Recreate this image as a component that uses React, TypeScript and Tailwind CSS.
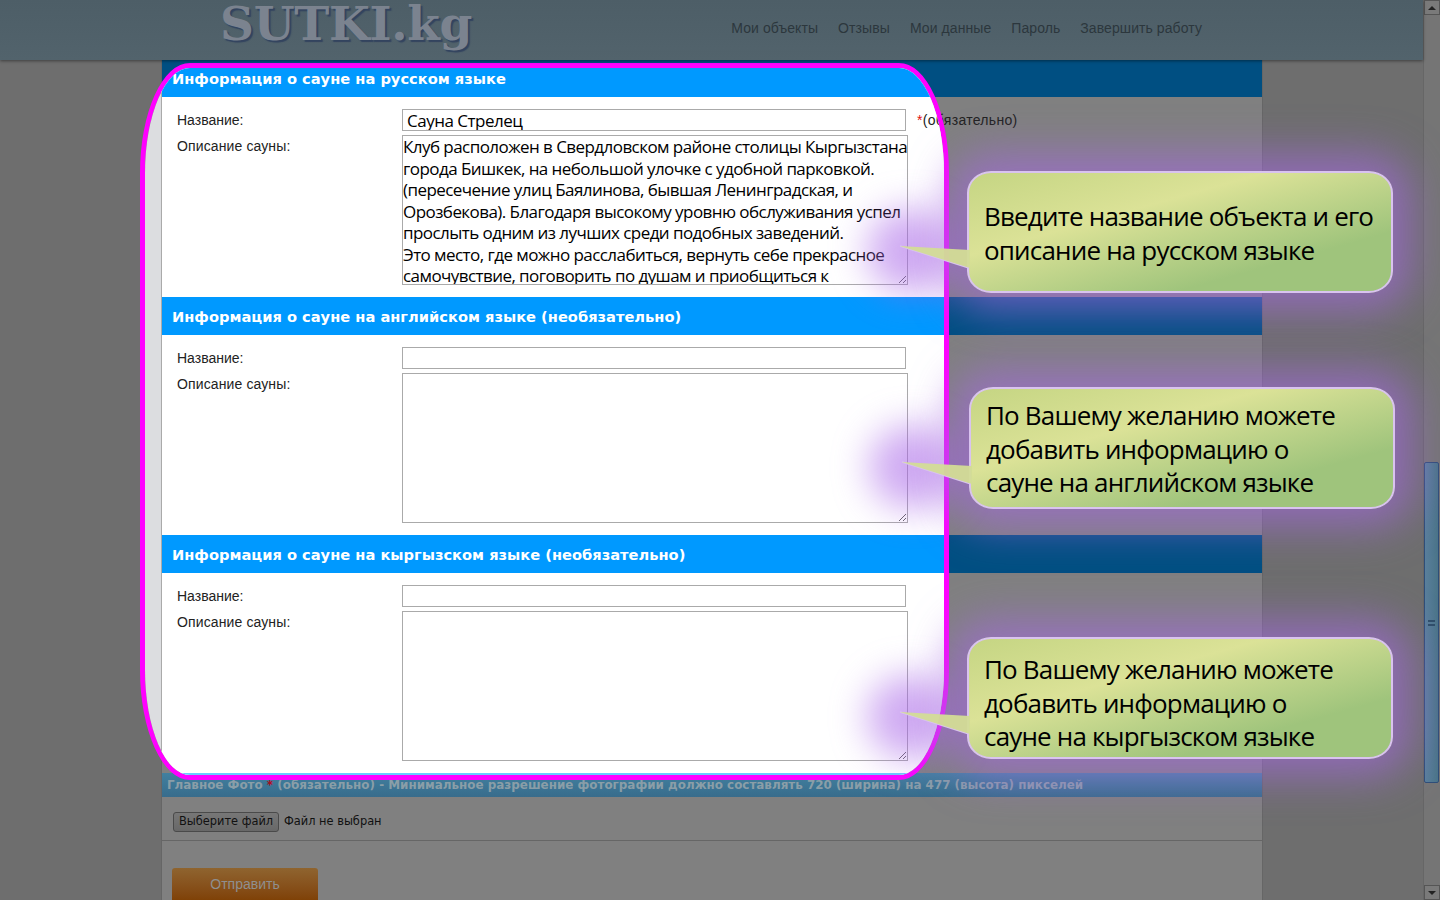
const RU_TEXT = `Клуб расположен в Свердловском районе столицы Кыргызстана
города Бишкек, на небольшой улочке с удобной парковкой.
(пересечение улиц Баялинова, бывшая Ленинградская, и
Орозбекова). Благодаря высокому уровню обслуживания успел
прослыть одним из лучших среди подобных заведений.
Это место, где можно расслабиться, вернуть себе прекрасное
самочувствие, поговорить по душам и приобщиться к
прекрасному.`;

const NAV = ["Мои объекты", "Отзывы", "Мои данные", "Пароль", "Завершить работу"];

function Section({
  title,
  name,
  text,
  required,
  bright,
  first,
}: {
  title: string;
  name?: string;
  text?: string;
  required?: boolean;
  bright: boolean;
  first?: boolean;
}) {
  const field = bright ? "border-[#aaaaaa] bg-white" : "border-[#555555] bg-[#808080]";
  return (
    <section>
      <h2
        className={`flex items-center pl-[10px] pt-[1px] font-['DejaVu_Sans'] text-[14.65px] font-bold text-white ${
          first ? "h-[37px]" : "h-[38px]"
        } ${bright ? "bg-[#0099ff]" : "bg-[#004f82]"}`}
      >
        {title}
      </h2>
      <div className="flex flex-col gap-[4px] px-[15px] py-[12px] text-[14px] text-[#222222]">
        <div className="flex h-[22px] items-center">
          <label className="w-[225px]">Название:</label>
          <input
            readOnly
            value={name ?? ""}
            className={`h-[22px] w-[504px] border px-[4px] pt-[2px] font-['Open_Sans'] text-[17px] tracking-[-0.5px] text-black ${field}`}
          />
          {required && (
            <span className="ml-[11px] tracking-[0.3px]">
              <span className="text-[#e01010]">*</span>(обязательно)
            </span>
          )}
        </div>
        <div className="flex">
          <label className="w-[225px] pt-[1px] tracking-[0.12px]">Описание сауны:</label>
          <textarea
            readOnly
            wrap="off"
            value={text ?? ""}
            className={`h-[150px] w-[506px] resize overflow-hidden whitespace-pre border p-0 font-['Open_Sans'] text-[17px] leading-[21.55px] tracking-[-0.56px] text-black outline-none ${field}`}
          />
        </div>
      </div>
    </section>
  );
}

function Page({ bright }: { bright: boolean }) {
  return (
    <div className={`font-['Liberation_Sans',sans-serif] ${bright ? "bg-[#dcdde0]" : "bg-[#6e6e6e]"}`}>
      {bright ? (
        <div className="h-[60px]" />
      ) : (
        <header className="relative z-10 flex h-[60px] items-start justify-between bg-gradient-to-b from-[#4d5e67] to-[#52636c] pl-[220px] pr-[221px] shadow-[0_1px_3px_rgba(0,0,0,0.45)]">
          <div className="font-['DejaVu_Serif',serif] text-[47px] font-bold leading-[48px] tracking-[-0.3px] text-[#7b838f] [text-shadow:2px_2px_1px_#33445f]">
            SUTKI.kg
          </div>
          <nav className="flex gap-[20px] pt-[20px] text-[14px] leading-[16px] tracking-[0.08px] text-[#2c373d]">
            {NAV.map((item) => (
              <a key={item}>{item}</a>
            ))}
          </nav>
        </header>
      )}

      <main
        className={`ml-[161px] h-[840px] w-[1102px] overflow-hidden border-x ${
          bright ? "border-[#aaaaaa] bg-white" : "border-[#666666] bg-[#808080]"
        }`}
      >
        <Section
          first
          bright={bright}
          required
          title="Информация о сауне на русском языке"
          name="Сауна Стрелец"
          text={RU_TEXT}
        />
        <Section bright={bright} title="Информация о сауне на английском языке (необязательно)" />
        <Section bright={bright} title="Информация о сауне на кыргызском языке (необязательно)" />

        {bright ? (
          <div className="h-[24px] bg-[#66ccff]" />
        ) : (
          <>
            <h3 className="flex h-[24px] items-center whitespace-pre bg-gradient-to-b from-[#41809f] to-[#386c8c] pl-[5px] pt-[2px] font-['DejaVu_Sans'] text-[11.93px] font-bold text-[#8a9ea8]">
              Главное Фото <span className="text-[#b00a20]">*</span> (обязательно) - Минимальное разрешение фотографии
              должно составлять 720 (ширина) на 477 (высота) пикселей
            </h3>
            <div className="flex h-[44px] items-center border-b border-[#666666] pl-[11px] pt-[7px] font-['DejaVu_Sans'] text-[11.4px] text-[#111111]">
              <button className="h-[20px] w-[106px] rounded-[3px] border border-[#4a4a4a] bg-gradient-to-b from-[#777777] to-[#686868] text-[#111111]">
                Выберите файл
              </button>
              <span className="ml-[5px]">Файл не выбран</span>
            </div>
            <button className="ml-[10px] mt-[27px] h-[36px] w-[146px] rounded-[3px] bg-gradient-to-b from-[#8f642f] to-[#7d3d00] pb-[4px] text-[14px] text-[#8f8f8f]">
              Отправить
            </button>
          </>
        )}
      </main>
    </div>
  );
}

function Scrollbar() {
  return (
    <div className="flex h-[900px] w-[17px] flex-col justify-between border-l border-[#666666] bg-[#757575]">
      <div className="flex h-[15px] items-center justify-center border border-[#555555] bg-[#7a7a7a]">
        <div className="h-0 w-0 border-x-[4px] border-b-[4px] border-x-transparent border-b-[#222222]" />
      </div>
      <div className="absolute right-[1px] top-[462px] flex h-[321px] w-[15px] items-center justify-center rounded-[2px] border border-[#2e4e78] bg-gradient-to-r from-[#5a7f9c] to-[#4a7488]">
        <div className="h-[6px] w-[7px] border-y-2 border-[#2e4e68]" />
      </div>
      <div className="flex h-[15px] items-center justify-center border border-[#555555] bg-[#7a7a7a]">
        <div className="h-0 w-0 border-x-[4px] border-t-[4px] border-x-transparent border-t-[#222222]" />
      </div>
    </div>
  );
}

function Callout({
  left,
  top,
  pad,
  lines,
}: {
  left: number;
  top: number;
  pad: string;
  lines: string[];
}) {
  return (
    <div className="absolute" style={{ left, top }}>
      {/* glow around the tail */}
      <div className="absolute left-[-100px] top-[38px] h-[84px] w-[90px] rounded-full bg-[#a765e8]/55 blur-[18px]" />
      <div
        className={`relative flex h-[122px] w-[426px] flex-col justify-center rounded-[24px/22px] border-2 border-[#d9c3ef] bg-gradient-to-br from-[#c5d583] via-[#dbe297] via-35% to-[#9fc47c] to-75% pl-[15px] font-['Open_Sans',sans-serif] text-[26px] leading-[33.5px] tracking-[-0.82px] text-black shadow-[0_0_40px_18px_rgba(165,105,225,0.62)] ${pad}`}
      >
        {lines.map((line) => (
          <div key={line}>{line}</div>
        ))}
      </div>
      <svg className="absolute left-[-68px] top-[71px]" width="72" height="36" viewBox="0 0 72 36">
        <polyline points="70,26 1,4" fill="none" stroke="#d9c3ef" strokeWidth="1.5" />
        <polygon points="1,4 71,8 71,26" fill="#d3dc96" fillOpacity="0.95" />
      </svg>
    </div>
  );
}

export default function App() {
  return (
    <div className="relative h-[900px] w-[1440px] overflow-hidden bg-[#6e6e6e]">
      <div className="flex">
        <div className="w-[1423px]">
          <Page bright={false} />
        </div>
        <Scrollbar />
      </div>

      {/* highlighted area: the same page seen through a rounded window */}
      <div className="absolute left-[140px] top-[63px] h-[717px] w-[809px] overflow-hidden rounded-[50px/110px] border-[5px] border-[#ff00ff]">
        <div className="absolute left-[-145px] top-[-68px] w-[1423px]">
          <Page bright />
        </div>
      </div>

      <Callout
        left={967}
        top={171}
        pad="pt-[3px]"
        lines={["Введите название объекта и его", "описание на русском языке"]}
      />
      <Callout
        left={969}
        top={387}
        pad="pt-[3px]"
        lines={["По Вашему желанию можете", "добавить информацию о", "сауне на английском языке"]}
      />
      <Callout
        left={967}
        top={637}
        pad="pt-[11px]"
        lines={["По Вашему желанию можете", "добавить информацию о", "сауне на кыргызском языке"]}
      />
    </div>
  );
}
